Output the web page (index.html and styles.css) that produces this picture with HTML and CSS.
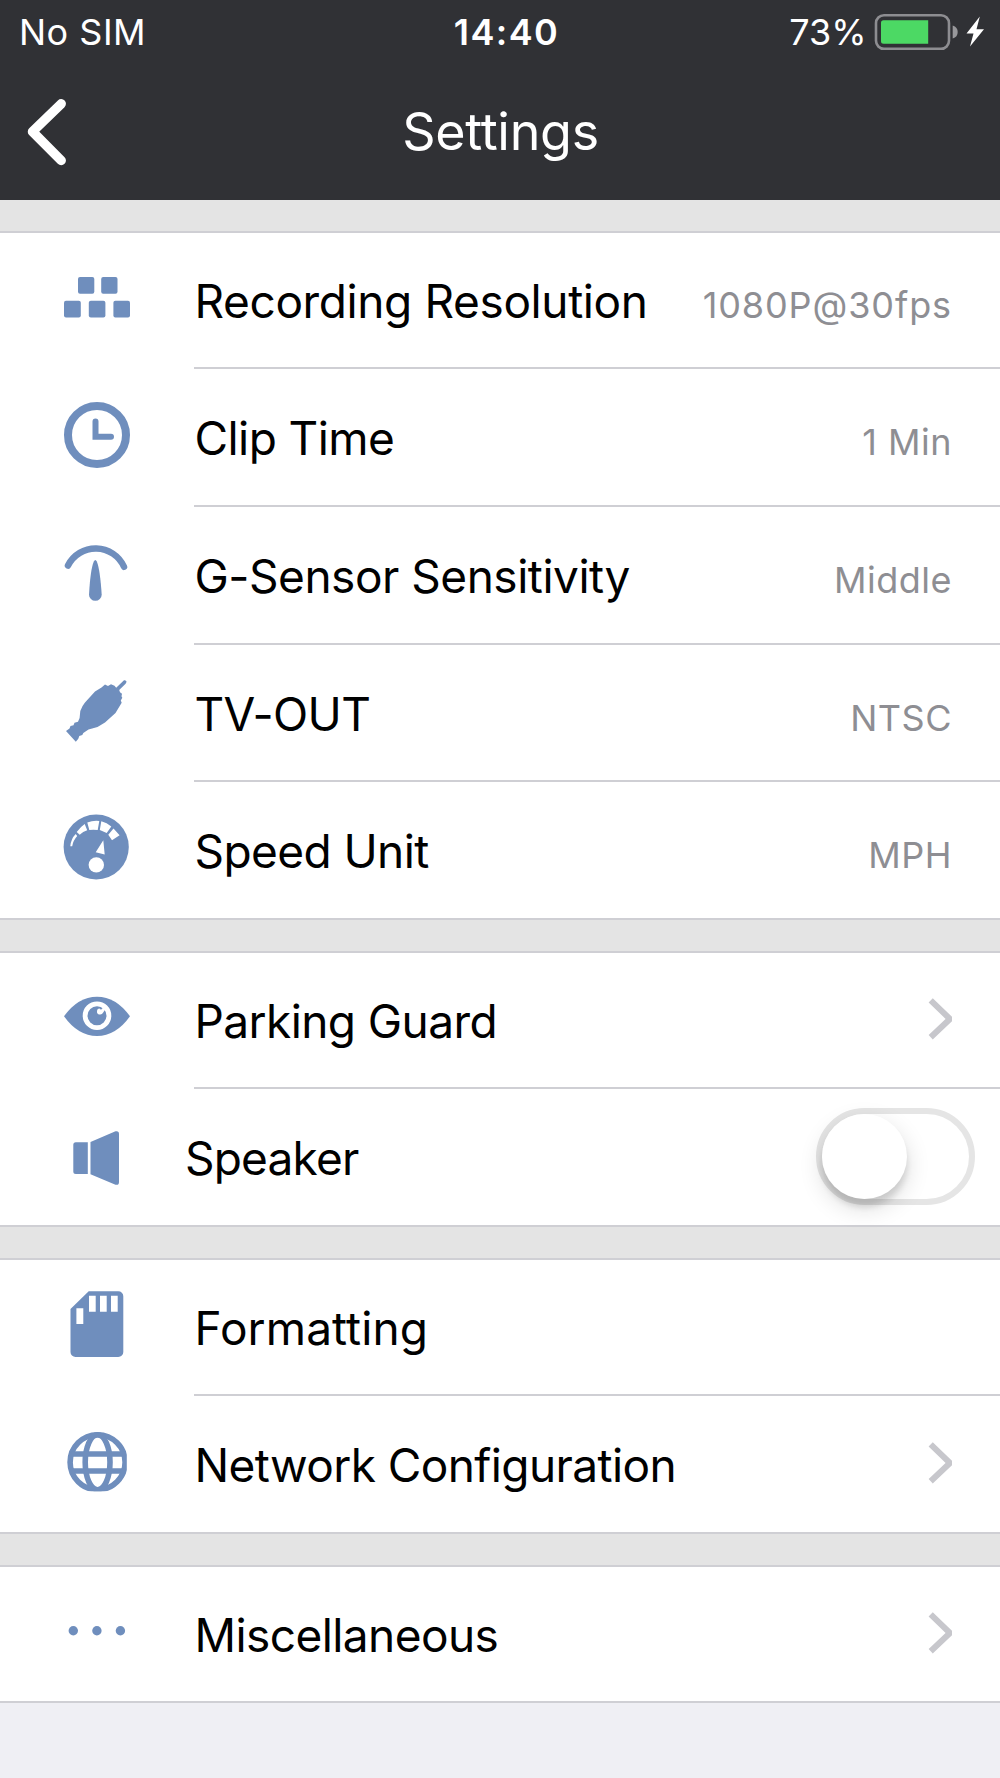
FILE: index.html
```html
<!DOCTYPE html>
<html lang="en">
<head>
<meta charset="utf-8">
<title>Settings</title>
<link rel="stylesheet" href="styles.css">
</head>
<body>
<header class="header">
  <div class="status">
    <span class="carrier">No SIM</span>
    <span class="time">14:40</span>
    <span class="power">
      <span class="percent">73%</span>
      <svg class="battery" width="112" height="40" viewBox="0 0 112 40">
        <rect x="2" y="3.200" width="73" height="33.600" rx="8" fill="none" stroke="#8d8d91" stroke-width="2.600"/>
        <path d="M9.500 8.200H54.200v23.600H9.500a2.500 2.500 0 0 1-2.500-2.500V10.700A2.500 2.500 0 0 1 9.500 8.200z" fill="#4cd964"/>
        <path d="M78.700 13.500q5 1.500 5 6.500t-5 6.500z" fill="#98989b"/>
        <path d="M105.800 4.500L92.500 21.500h7L96 34.500 110 17.200h-7.500z" fill="#fff"/>
      </svg>
    </span>
  </div>
  <div class="navbar">
    <svg class="back" width="60" height="80" viewBox="0 0 60 80"><path d="M41.200 11.800L12.500 39.700 41.200 68.500" fill="none" stroke="#fff" stroke-width="9.500" stroke-linecap="round" stroke-linejoin="round"/></svg>
    <h1 class="title">Settings</h1>
  </div>
</header>
<main>
  <section class="group">
    <div class="row resolution">
      <svg class="icon" viewBox="60 0 74 136"><rect x="78" y="44" width="16.300" height="16.800" rx="2"/><rect x="101.200" y="44" width="16.300" height="16.800" rx="2"/><rect x="64" y="67.800" width="16.800" height="16.800" rx="2"/><rect x="88.800" y="67.800" width="16.600" height="16.800" rx="2"/><rect x="113.400" y="67.800" width="16.600" height="16.800" rx="2"/></svg>
      <span class="label">Recording Resolution</span><span class="value">1080P@30fps</span>
    </div>
    <div class="row">
      <svg class="icon" viewBox="60 0 74 136"><g fill="none" stroke="#6f8ebd"><circle cx="97" cy="66" r="29" stroke-width="8"/><path d="M95.500 52.500V67.700H111" stroke-width="6" stroke-linecap="round"/></g></svg>
      <span class="label">Clip Time</span><span class="value">1 Min</span>
    </div>
    <div class="row sensor">
      <svg class="icon" viewBox="60 0 74 136"><path d="M68 58.500A31 31 0 0 1 124 59.800" fill="none" stroke="#6f8ebd" stroke-width="6.500" stroke-linecap="round"/><path d="M93.800 54.500Q95.300 51.500 96.800 54.500 100 62 101.700 87.500A6.300 6.300 0 1 1 89 87.500Q90.500 62 93.800 54.500z"/></svg>
      <span class="label">G-Sensor Sensitivity</span><span class="value">Middle</span>
    </div>
    <div class="row">
      <svg class="icon" viewBox="60 0 74 136"><path d="M66 86l3.500-2.500 1-2.500 3-.8 1-2.500 3.500-1L79.600 73l.7-7Q82 61 85 57.500L95 46.500l6.500-4 3.500-3 3 1.500 3-1.700 3.500 1.500 1.700 2 7.800-7.500q2-.5 2.600 1.500l-1 2L119.200 45l.8 2.200 2 1.500-.5 2.500.8 1.500-1.500 2.700.9 2.300-6.200 10.300L105 77.500l-7.500 4.500-9 2.500-5.200 3.500-1 2-3 1-1 2.800-2.500 3z"/></svg>
      <span class="label">TV-OUT</span><span class="value">NTSC</span>
    </div>
    <div class="row">
      <svg class="icon" viewBox="60 0 74 136"><circle cx="96.200" cy="65" r="32.600"/><g fill="#fff" transform="translate(0 .7)"><circle cx="96.300" cy="82.200" r="7.700"/><path d="M103.300 57.500l1.400 14.200-9-2.200zM70.300 63.500Q71 56 75.700 51.300L77.200 53.300Q73 58 72.200 63.500zM76.700 49.300Q80.500 44 84.700 41.200L87.200 47.500Q83 48.500 79.700 52zM87.300 39.700Q93 37.500 99.300 38.200L97.700 47.300Q93 46.700 89.300 47.300zM101.300 38.500Q107 39.800 111.300 43.700L106.700 50.300 99.800 47.300zM113.500 45.700L119.600 52.500 112 57.500 108.300 52z"/></g></svg>
      <span class="label">Speed Unit</span><span class="value">MPH</span>
    </div>
  </section>
  <section class="group">
    <div class="row">
      <svg class="icon" viewBox="60 0 74 136"><path d="M64 63.300Q78 43.700 97 43.700T130 63.300Q116 83 97 83T64 63.300z"/><circle cx="97" cy="62.700" r="11.900" fill="none" stroke="#fff" stroke-width="4.800"/><path d="M97 58.500q0-3 2.500-3l1.500 1.300 2.500-2.500 2 1.800-2.300 3.500q-1.200 2.400-3.800 1.900t-2.400-3z" fill="#fff"/></svg>
      <span class="label">Parking Guard</span>
      <svg class="chevron" viewBox="0 0 30 136"><path d="M8.700 47.300L28 66 8.700 84.300"/></svg>
    </div>
    <div class="row speaker">
      <svg class="icon" viewBox="60 0 74 136"><path d="M75.800 53.300H87.800V85H75.800a2.500 2.500 0 0 1-2.500-2.500V55.800a2.500 2.500 0 0 1 2.500-2.500zM90.500 52.900L115.500 42.300Q119 41.500 119 45V93Q119 96.500 115.500 95.700L90.500 85.300z"/></svg>
      <span class="label">Speaker</span>
      <span class="switch"><span class="knob"></span></span>
    </div>
  </section>
  <section class="group">
    <div class="row formatting">
      <svg class="icon" viewBox="60 0 74 136"><path d="M88.700 31.200H118.300a5 5 0 0 1 5 5V92a5 5 0 0 1-5 5H75.500a5 5 0 0 1-5-5V49z"/><path d="M89 35.700h6.700v16H89zM100 35.700h6.700v16H100zM111 35.700h6.700v16H111zM76.400 48.300h6.900v15.800h-6.900z" fill="#fff"/></svg>
      <span class="label">Formatting</span>
    </div>
    <div class="row">
      <svg class="icon" viewBox="60 0 74 136"><defs><clipPath id="globe"><path d="M60 30h66.800v65.300H60z"/></clipPath></defs><g clip-path="url(#globe)" fill="none" stroke="#6f8ebd" stroke-width="5.600"><circle cx="97.600" cy="66.300" r="27.500"/><ellipse cx="97.600" cy="66.300" rx="12.400" ry="27.500"/><path d="M71 58h53M71 75h53" stroke-width="5.300"/></g></svg>
      <span class="label">Network Configuration</span>
      <svg class="chevron" viewBox="0 0 30 136"><path d="M8.700 48.300L28 67 8.700 85.300"/></svg>
    </div>
  </section>
  <section class="group">
    <div class="row">
      <svg class="icon" viewBox="60 0 74 136"><circle cx="73.300" cy="63.700" r="4.700"/><circle cx="96.900" cy="63.700" r="4.700"/><circle cx="120.400" cy="63.700" r="4.700"/></svg>
      <span class="label">Miscellaneous</span>
      <svg class="chevron" viewBox="0 0 30 136"><path d="M8.700 47.300L28 66 8.700 84.300"/></svg>
    </div>
  </section>
</main>
</body>
</html>
```
FILE: styles.css
```css
* { box-sizing: border-box; }
body {
  margin: 0;
  min-height: 1778px;
  background: #efeff4;
  color: #000;
  font-family: Inter, "Liberation Sans", sans-serif;
}
.header {
  height: 200.3px;
  background: #303135;
  color: #fff;
}
.status {
  display: grid;
  grid-template-columns: 1fr auto 1fr;
  height: 64px;
  padding: 0 14px 0 19px;
  font-size: 36px;
  line-height: 65px;
}
.carrier { letter-spacing: .5px; }
.time {
  padding-left: 8px;
  font-weight: 600;
  letter-spacing: 1.4px;
}
.power {
  display: flex;
  justify-content: flex-end;
  gap: 7.5px;
}
.battery { margin-top: 12px; }
.navbar {
  display: grid;
  grid-template-columns: 120px 1fr 120px;
  height: 136px;
}
.back { margin: 28px 0 0 20px; }
.title {
  margin: 0;
  padding-left: 1px;
  font-size: 52px;
  font-weight: 400;
  letter-spacing: -.3px;
  line-height: 136px;
  text-align: center;
}
main { background: #e4e4e4; padding-top: 31px; }
.group {
  border-top: 2px solid #cfcfd4;
  background: #fff;
}
.group + .group { margin-top: 31.25px; }
.row {
  display: flex;
  align-items: baseline;
  height: 137.7px;
  padding: 0 50px 0 60px;
  line-height: 138px;
  background: linear-gradient(#cfcfd4, #cfcfd4) 194px 100% / 100% 2px no-repeat;
}
.row:first-child { height: 136px; line-height: 136px; }
.row:last-child { background-position: 0 100%; }
.icon {
  align-self: flex-start;
  width: 74px;
  height: 136px;
  fill: #6f8ebd;
}
.label {
  margin-left: 60.500px;
  font-size: 46px;
  letter-spacing: -.58px;
  white-space: nowrap;
}
.value {
  margin-right: -2px;
  margin-left: auto;
  color: #8e8e93;
  font-size: 36px;
  letter-spacing: .5px;
  line-height: 1;
}
.resolution .label { letter-spacing: -.38px; }
.resolution .value { letter-spacing: .9px; }
.sensor .label { letter-spacing: -.48px; }
.formatting .label { letter-spacing: .1px; }
.chevron {
  align-self: flex-start;
  width: 30px;
  height: 136px;
  margin: 0 -1.500px 0 auto;
  fill: none;
  stroke: #c7c7cc;
  stroke-width: 6px;
}
.speaker { padding-right: 25px; }
.speaker .label { margin-left: 51px; letter-spacing: -.8px; }
.switch {
  align-self: flex-start;
  width: 159px;
  height: 97px;
  margin: 19px 0 0 auto;
  border: 6px solid #e5e5e5;
  border-radius: 49px;
}
.knob {
  display: block;
  width: 85px;
  height: 85px;
  border-radius: 50%;
  background: #fff;
  box-shadow: 0 9px 24px rgba(0, 0, 0, .14), 0 8px 6px rgba(0, 0, 0, .12);
}
```
